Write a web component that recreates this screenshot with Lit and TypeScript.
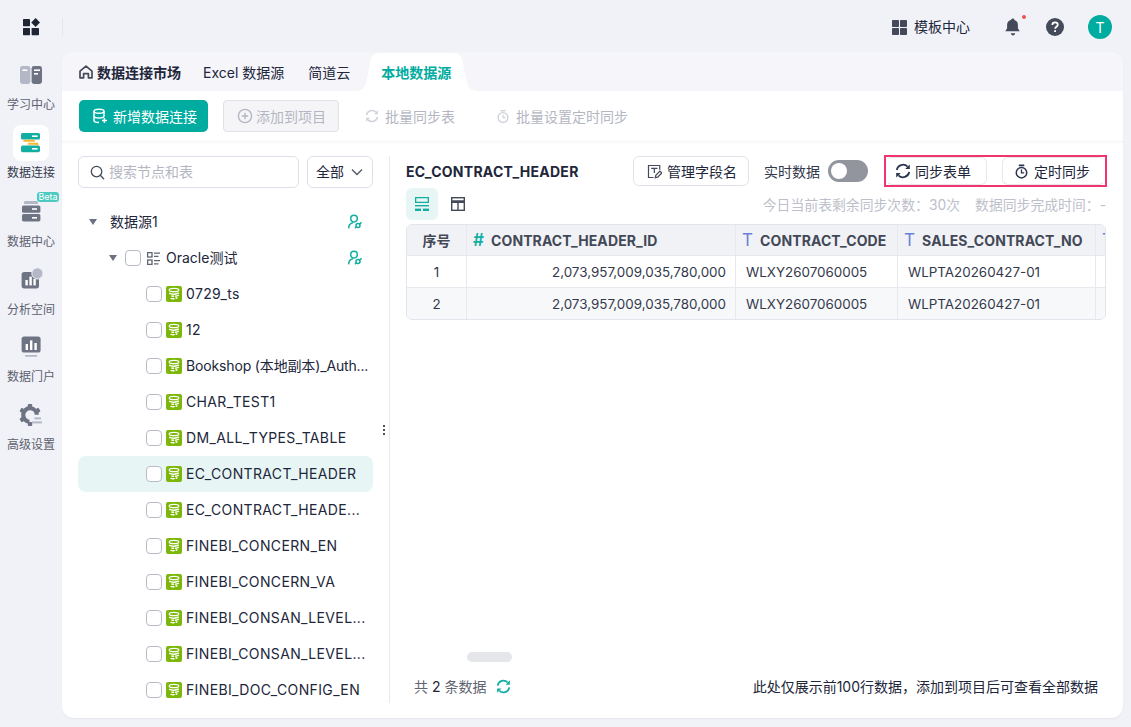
import { LitElement, html, css, svg } from 'lit';
import { customElement } from 'lit/decorators.js';

const syncPath = svg`<path d="M1.800 7A6.300 6.300 0 0 1 12.500 3.600M14.200 9A6.300 6.300 0 0 1 3.500 12.400" fill="none" stroke="currentColor" stroke-width="1.800"/><path d="M14.800 1.400v4.600H10.200zM1.200 14.600V10H5.800z" fill="currentColor"/>`;
const timerPath = svg`<circle cx="8" cy="9.200" r="5.600" fill="none" stroke="currentColor" stroke-width="1.600"/><path d="M5.800 1.400h4.400" stroke="currentColor" stroke-width="1.800" stroke-linecap="round"/><path d="M8 6.400v3h2.400" fill="none" stroke="currentColor" stroke-width="1.400" stroke-linecap="round"/>`;

const dbIcon = svg`<svg class="db" viewBox="0 0 16 16" width="16" height="16"><rect width="16" height="16" rx="2" fill="#7cb70a"/><ellipse cx="8" cy="4" rx="4.800" ry="1.700" fill="none" stroke="#fff" stroke-width="1.200"/><path d="M3.200 7.200c2.400 1.500 6.800 1.300 9.600-.3" fill="none" stroke="#fff" stroke-width="1.400"/><path d="M12.800 9.200c-2 1.100-4.800 1.300-7.400.8M4.600 12.300c2.200.7 4.800.5 6.800-.6" fill="none" stroke="#fff" stroke-width="1.400" stroke-dasharray="4 1"/></svg>`;

const linkIcon = svg`<svg class="link" viewBox="0 0 16 16" width="16" height="16" fill="none" stroke="#12aea2" stroke-width="1.500"><circle cx="7" cy="4.600" r="3.300"/><path d="M1.600 14.400c.2-3.200 2-5.200 4.400-5.600"/><circle cx="11" cy="11.400" r="2"/><path d="M12.600 10l2-1.600M9.400 12.800l-1.400 1.400"/></svg>`;

const sideIcons = [
  svg`<svg viewBox="0 0 24 24" width="24" height="24"><rect x="1" y="3" width="10.400" height="18" rx="2.400" fill="#b4b8c6"/><rect x="12.600" y="3" width="10.400" height="18" rx="2.400" fill="#6e7484"/><rect x="3.400" y="6.400" width="5" height="1.600" fill="#fff"/><rect x="15" y="6.400" width="6" height="1.600" fill="#fff"/><rect x="15" y="10" width="4" height="1.600" fill="#fff"/></svg>`,
  svg`<svg viewBox="0 0 24 24" width="24" height="24"><rect x="2" y="2" width="19" height="6.600" rx="1.600" fill="#12aea2"/><rect x="2" y="14.600" width="19" height="6.600" rx="1.600" fill="#12aea2"/><rect x="13" y="4.400" width="5.600" height="1.600" fill="#fff"/><rect x="13" y="17" width="5.600" height="1.600" fill="#fff"/><path d="M4.400 9.800h11.400M9 12.800h9.200v2" fill="none" stroke="#f5b731" stroke-width="2"/></svg>`,
  svg`<svg viewBox="0 0 24 24" width="24" height="24"><path d="M5 3.400C5 2.400 6 2 7 2h10c1 0 2 .4 2 1.400V5H5z" fill="#b4b8c6"/><rect x="3" y="6.400" width="18.400" height="7.400" rx="1.600" fill="#6e7484"/><rect x="3" y="15" width="18.400" height="7.400" rx="1.600" fill="#6e7484"/><rect x="13" y="9.200" width="5" height="1.600" fill="#fff"/><rect x="13" y="18" width="5" height="1.600" fill="#fff"/></svg>`,
  svg`<svg viewBox="0 0 24 24" width="24" height="24"><rect x="2.600" y="5" width="17.400" height="16.400" rx="2.600" fill="#6e7484"/><rect x="6.400" y="13" width="2.400" height="5.400" fill="#fff"/><rect x="10.400" y="9.600" width="2.400" height="8.800" fill="#fff"/><rect x="14.400" y="12" width="2.400" height="6.400" fill="#fff"/><circle cx="18.400" cy="6.400" r="5.600" fill="#b4b8c6" stroke="#f1f2f8"/></svg>`,
  svg`<svg viewBox="0 0 24 24" width="24" height="24"><rect x="2.600" y="1.600" width="19" height="16" rx="2.600" fill="#6e7484"/><rect x="6.600" y="9" width="2.400" height="6" fill="#fff"/><rect x="11" y="5.400" width="2.400" height="9.600" fill="#fff"/><rect x="15.400" y="8" width="2.400" height="7" fill="#fff"/><rect x="6" y="20" width="12.400" height="1.800" rx=".9" fill="#b4b8c6"/></svg>`,
  svg`<svg viewBox="0 0 24 24" width="24" height="24"><circle cx="11" cy="12" r="6.800" fill="none" stroke="#6e7484" stroke-width="4.200" stroke-dasharray="31 12" transform="rotate(95 11 12)"/><g fill="#6e7484"><rect x="8.800" y="1" width="4.400" height="4" rx=".8"/><rect x="8.800" y="1" width="4.400" height="4" rx=".8" transform="rotate(60 11 12)"/><rect x="8.800" y="1" width="4.400" height="4" rx=".8" transform="rotate(300 11 12)"/><rect x="8.800" y="1" width="4.400" height="4" rx=".8" transform="rotate(240 11 12)"/><rect x="8.800" y="1" width="4.400" height="4" rx=".8" transform="rotate(180 11 12)"/></g><rect x="15.400" y="14.400" width="6.600" height="2" fill="#b4b8c6"/><rect x="13" y="18.400" width="10" height="2" fill="#b4b8c6"/></svg>`,
];

const navItems = ['学习中心', '数据连接', '数据中心', '分析空间', '数据门户', '高级设置'];

const tables = [
  '0729_ts', '12', 'Bookshop (本地副本)_Auth...', 'CHAR_TEST1', 'DM_ALL_TYPES_TABLE',
  'EC_CONTRACT_HEADER', 'EC_CONTRACT_HEADE...', 'FINEBI_CONCERN_EN', 'FINEBI_CONCERN_VA',
  'FINEBI_CONSAN_LEVEL...', 'FINEBI_CONSAN_LEVEL...', 'FINEBI_DOC_CONFIG_EN',
];

const columns = [
  { type: '#', name: 'CONTRACT_HEADER_ID' },
  { type: 'T', name: 'CONTRACT_CODE' },
  { type: 'T', name: 'SALES_CONTRACT_NO' },
  { type: 'T', name: '' },
];

const rows = [1, 2];

@customElement('app-root')
export class AppRoot extends LitElement {
  static styles = css`
    :host {
      display: block;
      width: 1131px;
      height: 727px;
      overflow: hidden;
      background: #f1f2f8;
      color: #21263a;
      font-family: Inter, 'Noto Sans CJK SC', sans-serif;
      font-size: 14px;
    }
    svg { display: block; flex: none; }
    .top {
      height: 52px;
      display: flex;
      align-items: center;
      padding: 2px 19px 0 22px;
      box-sizing: border-box;
    }
    .logo { margin-right: 22px; }
    .top-sep { width: 1px; height: 18px; background: #e5e6ec; }
    .top-right { margin-left: auto; display: flex; align-items: center; }
    .tpl { display: flex; align-items: center; gap: 7px; margin-right: 35px; }
    .tpl span { margin-top: -3px; }
    .bell { position: relative; margin-right: 25px; }
    .dot {
      position: absolute;
      top: -3px;
      right: -5px;
      width: 4px;
      height: 4px;
      border-radius: 50%;
      background: #ef5350;
    }
    .help { margin-right: 24px; }
    .avatar {
      width: 24px;
      height: 24px;
      border-radius: 50%;
      background: #00ab9f;
      color: #fff;
      display: flex;
      align-items: center;
      justify-content: center;
      font-size: 14px;
    }
    .body { display: flex; height: 666px; }
    .side { width: 62px; flex: none; padding-top: 5px; }
    .nav {
      height: 68px;
      display: flex;
      flex-direction: column;
      align-items: center;
      font-size: 12px;
      line-height: 16px;
      color: #5c616e;
      position: relative;
    }
    .nav-ic {
      width: 36px;
      height: 36px;
      display: flex;
      align-items: center;
      justify-content: center;
      border-radius: 8px;
      margin-bottom: 4px;
    }
    .nav:nth-child(3) > span:last-child,
    .nav:nth-child(4) > span:last-child { margin-top: 1px; }
    .nav.on { color: #33384a; }
    .nav.on .nav-ic { background: #fff; }
    .beta {
      position: absolute;
      top: -1px;
      left: 37px;
      width: 22px;
      height: 10px;
      line-height: 10px;
      border-radius: 3px;
      background: #4ccabf;
      color: #fff;
      font-size: 9px;
      text-align: center;
    }
    .card {
      width: 1061px;
      background: #fff;
      border-radius: 12px;
      overflow: hidden;
      display: flex;
      flex-direction: column;
      box-shadow: 0 1px 2px rgba(40, 50, 90, .06);
    }
    .tabs {
      height: 39px;
      flex: none;
      background: #f5f5fa;
      display: flex;
      align-items: center;
      padding-left: 17px;
      box-sizing: border-box;
    }
    .tab { display: flex; align-items: center; gap: 4px; white-space: nowrap; }
    .tab.home { font-weight: 600; margin-right: 22px; }
    .tab.excel { margin-right: 24px; }
    .tab.cur {
      position: relative;
      align-self: flex-end;
      height: 38px;
      width: 102px;
      margin-left: 15px;
      justify-content: center;
      color: #00ab9f;
      font-weight: 600;
    }
    .tab.cur span { position: relative; }
    .tab-bg { position: absolute; left: -12px; bottom: 0; }
    .tools {
      height: 51px;
      flex: none;
      box-sizing: border-box;
      display: flex;
      align-items: center;
      padding-left: 17px;
      border-bottom: 1px solid #f4f5f8;
      box-shadow: 0 1px 3px rgba(40, 50, 90, .03);
    }
    .btn-main {
      width: 129px;
      height: 32px;
      border-radius: 5px;
      background: #00ab9f;
      color: #fff;
      display: flex;
      align-items: center;
      padding-left: 13px;
      gap: 5px;
      box-sizing: border-box;
      margin-right: 15px;
    }
    .btn-off {
      width: 116px;
      height: 32px;
      border-radius: 4px;
      border: 1px solid #e0e2e9;
      background: #f5f5f7;
      color: #b4b7c2;
      display: flex;
      align-items: center;
      padding-left: 13px;
      gap: 3px;
      box-sizing: border-box;
      margin-right: 26px;
    }
    .act { display: flex; align-items: center; gap: 6px; color: #b4b7c2; margin-right: 41px; }
    .act svg { color: #d0d3db; }
    .panes { flex: 1; display: flex; min-height: 0; }
    .left {
      width: 328px;
      flex: none;
      box-sizing: border-box;
      padding: 0 16px;
      margin-top: 14px;
      margin-bottom: 15px;
      border-right: 1px solid #e8e9ee;
      position: relative;
      overflow: hidden;
    }
    .filters { display: flex; gap: 8px; margin-bottom: 16px; }
    .search {
      width: 221px;
      height: 32px;
      border: 1px solid #dcdfe8;
      border-radius: 6px;
      box-sizing: border-box;
      display: flex;
      align-items: center;
      padding-left: 11px;
      gap: 4px;
      color: #b4b7c2;
    }
    .select {
      width: 66px;
      height: 32px;
      border: 1px solid #dcdfe8;
      border-radius: 6px;
      box-sizing: border-box;
      display: flex;
      align-items: center;
      padding-left: 8px;
      gap: 7px;
    }
    .search span, .select span { margin-top: -2px; }
    .row {
      height: 36px;
      width: 295px;
      display: flex;
      align-items: center;
      box-sizing: border-box;
      border-radius: 8px;
      position: relative;
    }
    .row.sel { background: #e7f6f5; }
    .row.l0 { padding-left: 11px; }
    .row.l1 { padding-left: 31px; }
    .row.l2 { padding-left: 68px; }
    .caret {
      width: 0;
      height: 0;
      border-left: 4.500px solid transparent;
      border-right: 4.500px solid transparent;
      border-top: 6px solid #6c7180;
      margin-right: 13px;
      flex: none;
    }
    .row.l1 .caret { margin-right: 8px; }
    .check {
      width: 16px;
      height: 16px;
      box-sizing: border-box;
      border: 1px solid #b8bbc6;
      border-radius: 4px;
      background: #fff;
      flex: none;
      margin-right: 4px;
    }
    .row.l1 .check { margin-right: 6px; }
    .db { margin-right: 4px; }
    .row.l1 .tree-ic { margin-right: 6px; }
    .label { white-space: nowrap; margin-top: -2px; }
    .row.l2 .label { letter-spacing: .36px; }
    .row.l2 .label.mixed { letter-spacing: -.15px; }
    .link { position: absolute; right: 10px; top: 10px; }
    .kebab {
      position: absolute;
      right: 4px;
      top: 269px;
      display: flex;
      flex-direction: column;
      gap: 2px;
    }
    .kebab i { width: 2px; height: 2px; background: #4a5060; display: block; }
    .right {
      flex: 1;
      min-width: 0;
      box-sizing: border-box;
      padding: 13px 16px 0 16px;
      display: flex;
      flex-direction: column;
      position: relative;
    }
    .head { display: flex; align-items: center; height: 32px; }
    .title { font-weight: 700; font-size: 14px; width: 227px; flex: none; letter-spacing: .26px; }
    .btn {
      height: 30px;
      border: 1px solid #e1e3ea;
      border-radius: 6px;
      box-sizing: border-box;
      display: flex;
      align-items: center;
      gap: 5px;
      background: #fff;
      flex: none;
    }
    .btn.names { width: 116px; padding-left: 13px; margin-right: 15px; }
    .live { color: #33384a; margin-right: 8px; flex: none; white-space: nowrap; }
    .toggle {
      width: 40px;
      height: 22px;
      border-radius: 11px;
      background: #93959e;
      position: relative;
      margin-right: 16px;
      flex: none;
    }
    .toggle i {
      position: absolute;
      left: 3px;
      top: 3px;
      width: 16px;
      height: 16px;
      border-radius: 50%;
      background: #fff;
    }
    .hl {
      border: 2px solid #f0356f;
      width: 223px;
      height: 32px;
      box-sizing: border-box;
      display: flex;
      gap: 15px;
      flex: none;
    }
    .hl .btn { height: 28px; border-color: #e6e8ee; }
    .hl .sync { width: 101px; padding-left: 8px; border-left-color: transparent; gap: 4px; }
    .hl .timer { width: 103px; padding-left: 11px; border-right-color: transparent; }
    .ic-dark { color: #2c3450; }
    .meta { display: flex; align-items: center; height: 32px; margin-top: 1px; margin-bottom: 4px; padding-right: 1px; }
    .view {
      width: 32px;
      height: 32px;
      border-radius: 6px;
      display: flex;
      align-items: center;
      justify-content: center;
    }
    .view.on { background: #e7f6f5; margin-right: 4px; }
    .info { margin-left: auto; display: flex; gap: 15px; color: #bdc0ca; font-size: 13.850px; }
    .table {
      border: 1px solid #e3e5ec;
      border-radius: 6px;
      overflow: hidden;
      display: grid;
      grid-template-columns: 60px 269px 162px 198px 9px;
      width: 700px;
      box-sizing: border-box;
      font-size: 13.400px;
    }
    .cell {
      height: 32px;
      box-sizing: border-box;
      border-right: 1px solid #e8e9ef;
      border-bottom: 1px solid #e8e9ef;
      display: flex;
      align-items: center;
      padding: 0 9px 0 10px;
      white-space: nowrap;
      overflow: hidden;
      color: #33384a;
    }
    .cell.last { border-right: none; padding: 0 0 0 6px; }
    .cell.th {
      height: 31px;
      background: #f1f2f6;
      font-weight: 700;
      font-size: 14px;
      letter-spacing: .1px;
      color: #434856;
      gap: 7px;
      padding-left: 6px;
    }
    .cell.idx { justify-content: center; padding: 0; }
    .cell.num { justify-content: flex-end; }
    .cell.even { background: #f7f8fa; }
    .cell.end { border-bottom: none; height: 31px; }
    .ty { font-size: 17px; font-weight: 400; line-height: 1; }
    .ty.n { color: #12aea2; font-weight: 600; }
    .ty.t { color: #6a80d8; }
    .thumb {
      position: absolute;
      left: 77px;
      top: 510px;
      width: 45px;
      height: 10px;
      border-radius: 5px;
      background: #e5e6ea;
    }
    .foot {
      margin-top: auto;
      height: 30px;
      margin-bottom: 17px;
      display: flex;
      align-items: center;
      padding: 0 9px 0 8px;
      font-size: 14px;
    }
    .count { color: #5f6470; }
    .count b { font-weight: 400; color: #21263a; }
    .foot svg { color: #12aea2; margin-left: 10px; }
    .foot .note { margin-left: auto; }
  `;

  render() {
    return html`
      <div class="top">
        <svg class="logo" viewBox="0 0 18 18" width="18" height="18" fill="#1f2535">
          <rect x="1" y="1" width="7" height="7.200" rx=".6"/>
          <path d="M13.600 0 18 4.500 13.600 9 9.200 4.500z"/>
          <rect x="1" y="10" width="7" height="7.200" rx=".6"/>
          <rect x="9.600" y="10" width="7.400" height="7.200" rx=".6"/>
        </svg>
        <div class="top-sep"></div>
        <div class="top-right">
          <div class="tpl">
            <svg viewBox="0 0 15 15" width="15" height="15" fill="#444a5a">
              <rect width="7" height="7" rx=".8"/><rect x="8" width="7" height="7" rx=".8"/>
              <rect y="8" width="7" height="7" rx=".8"/><rect x="8" y="8" width="7" height="7" rx=".8"/>
            </svg>
            <span>模板中心</span>
          </div>
          <div class="bell">
            <svg viewBox="0 0 16 18" width="16" height="18" fill="#444a5a">
              <path d="M8 .6c.8 0 1.300.6 1.300 1.300 2.300.6 3.600 2.600 3.600 5v3.400l1.800 3H.3l1.800-3V6.900c0-2.400 1.300-4.400 3.600-5C6.700 1.200 7.200.6 8 .6z"/>
              <path d="M5.800 15.200h4.400C10 16.600 9.100 17.400 8 17.400s-2-.8-2.200-2.200z"/>
            </svg>
            <i class="dot"></i>
          </div>
          <svg class="help" viewBox="0 0 18 18" width="18" height="18">
            <circle cx="9" cy="9" r="9" fill="#444a5a"/>
            <path d="M6.300 7c0-1.600 1.200-2.600 2.800-2.600S11.800 5.400 11.800 6.800c0 2-2.700 2-2.700 4" fill="none" stroke="#fff" stroke-width="1.700"/>
            <rect x="8.200" y="12.200" width="1.800" height="1.800" fill="#fff"/>
          </svg>
          <div class="avatar">T</div>
        </div>
      </div>
      <div class="body">
        <div class="side">
          ${navItems.map((name, i) => html`
            <div class="nav ${i === 1 ? 'on' : ''}">
              ${i === 2 ? html`<span class="beta">Beta</span>` : ''}
              <div class="nav-ic">${sideIcons[i]}</div>
              <span>${name}</span>
            </div>`)}
        </div>
        <div class="card">
          <div class="tabs">
            <div class="tab home">
              <svg viewBox="0 0 14 14" width="14" height="14" fill="none" stroke="#444a5a" stroke-width="1.700">
                <path d="M1 6.200 7 1.200l6 5V12.800H9.400V8.600H4.600v4.200H1z" stroke-linejoin="round"/>
              </svg>
              <span>数据连接市场</span>
            </div>
            <div class="tab excel">Excel 数据源</div>
            <div class="tab">简道云</div>
            <div class="tab cur">
              <svg class="tab-bg" viewBox="0 0 127 38" width="127" height="38">
                <path d="M0 38c8 0 12-2 13.500-10L17 10C18 3 21 0 27 0h73c6 0 9 3 10 10l3.500 18c1.500 8 5.500 10 13.500 10z" fill="#fff"/>
              </svg>
              <span>本地数据源</span>
            </div>
          </div>
          <div class="tools">
            <div class="btn-main">
              <svg viewBox="0 0 16 16" width="16" height="16" fill="none" stroke="#fff" stroke-width="1.500">
                <ellipse cx="7" cy="3.200" rx="5" ry="2"/>
                <path d="M2 3.200v9.400c0 1.100 2.200 2 5 2M2 8c0 1.100 2.200 2 5 2s5-.9 5-2V3.200"/>
                <path d="M12.400 10v5M10 12.500h5"/>
              </svg>
              <span>新增数据连接</span>
            </div>
            <div class="btn-off">
              <svg viewBox="0 0 16 16" width="16" height="16" fill="none" stroke="#b4b7c2" stroke-width="1.400">
                <circle cx="8" cy="8" r="6.600"/><path d="M8 4.800v6.400M4.800 8h6.400"/>
              </svg>
              <span>添加到项目</span>
            </div>
            <div class="act">
              <svg viewBox="0 0 16 16" width="14" height="14">${syncPath}</svg>
              <span>批量同步表</span>
            </div>
            <div class="act">
              <svg viewBox="0 0 16 16" width="14" height="15">${timerPath}</svg>
              <span>批量设置定时同步</span>
            </div>
          </div>
          <div class="panes">
            <div class="left">
              <div class="filters">
                <div class="search">
                  <svg viewBox="0 0 16 16" width="15" height="15" fill="none" stroke="#444a5a" stroke-width="1.400">
                    <circle cx="7" cy="7" r="5.600"/><path d="M11.200 11.200 14.600 14.600" stroke-linecap="round"/>
                  </svg>
                  <span>搜索节点和表</span>
                </div>
                <div class="select">
                  <span>全部</span>
                  <svg viewBox="0 0 12 8" width="12" height="8" fill="none" stroke="#555a68" stroke-width="1.400">
                    <path d="M1 1.500 6 6.500l5-5"/>
                  </svg>
                </div>
              </div>
              <div class="row l0">
                <i class="caret"></i><span class="label">数据源1</span>${linkIcon}
              </div>
              <div class="row l1">
                <i class="caret"></i><i class="check"></i>
                <svg class="tree-ic" viewBox="0 0 13 13" width="13" height="13" fill="none" stroke="#5f6470" stroke-width="1.300">
                  <rect x=".6" y=".6" width="4.400" height="4.400"/><rect x=".6" y="8" width="4.400" height="4.400"/>
                  <path d="M7 1.200h6M7 4.400h4.500M7 8.600h6M7 11.800h4.500"/>
                </svg>
                <span class="label">Oracle测试</span>${linkIcon}
              </div>
              ${tables.map(name => html`
                <div class="row l2 ${name === 'EC_CONTRACT_HEADER' ? 'sel' : ''}">
                  <i class="check"></i>${dbIcon}<span class="label ${name.startsWith('Bookshop') ? 'mixed' : ''}">${name}</span>
                </div>`)}
              <div class="kebab"><i></i><i></i><i></i></div>
            </div>
            <div class="right">
              <div class="head">
                <div class="title">EC_CONTRACT_HEADER</div>
                <div class="btn names">
                  <svg viewBox="0 0 16 16" width="15" height="15" fill="none" stroke="#444a5a" stroke-width="1.300">
                    <path d="M13.600 6V1.600H1.600v12.800H7"/><path d="M4.400 4.600h6.800M7.800 4.600v5"/><path d="M8.800 14.600l.6-2.600 4.400-4.400 2 2-4.400 4.400z"/>
                  </svg>
                  <span>管理字段名</span>
                </div>
                <div class="live">实时数据</div>
                <div class="toggle"><i></i></div>
                <div class="hl">
                  <div class="btn sync">
                    <svg class="ic-dark" viewBox="0 0 16 16" width="16" height="16">${syncPath}</svg>
                    <span>同步表单</span>
                  </div>
                  <div class="btn timer">
                    <svg class="ic-dark" viewBox="0 0 16 16" width="15" height="15">${timerPath}</svg>
                    <span>定时同步</span>
                  </div>
                </div>
              </div>
              <div class="meta">
                <div class="view on">
                  <svg viewBox="0 0 14 14" width="14" height="14" fill="#12aea2">
                    <path d="M0 0h14v6H0zM1.300 1.300v3.400h11.400V1.300z" fill-rule="evenodd"/>
                    <rect y="8" width="14" height="1.400"/><rect y="11.600" width="6" height="2.400"/><rect x="8" y="11.600" width="6" height="2.400"/>
                  </svg>
                </div>
                <div class="view">
                  <svg viewBox="0 0 14 14" width="14" height="14" fill="none" stroke="#444a5a" stroke-width="1.400">
                    <rect x=".7" y=".7" width="12.600" height="12.600"/>
                    <path d="M.7 4.600h12.600" stroke-width="2.600"/><path d="M7 5v8"/>
                  </svg>
                </div>
                <div class="info">
                  <span>今日当前表剩余同步次数：30次</span>
                  <span>数据同步完成时间：-</span>
                </div>
              </div>
              <div class="table">
                <div class="cell th idx">序号</div>
                ${columns.map((c, i) => html`
                  <div class="cell th ${i === 3 ? 'last' : ''}">
                    <span class="ty ${c.type === '#' ? 'n' : 't'}">${c.type}</span>
                    ${c.name ? html`<span>${c.name}</span>` : ''}
                  </div>`)}
                ${rows.map(n => {
                  const cls = `${n === 2 ? 'even end' : ''}`;
                  return html`
                    <div class="cell idx ${cls}">${n}</div>
                    <div class="cell num ${cls}">2,073,957,009,035,780,000</div>
                    <div class="cell ${cls}">WLXY2607060005</div>
                    <div class="cell ${cls}">WLPTA20260427-01</div>
                    <div class="cell last ${cls}"></div>`;
                })}
              </div>
              <div class="thumb"></div>
              <div class="foot">
                <span class="count">共 <b>2</b> 条数据</span>
                <svg viewBox="0 0 16 16" width="15" height="15">${syncPath}</svg>
                <span class="note">此处仅展示前100行数据，添加到项目后可查看全部数据</span>
              </div>
            </div>
          </div>
        </div>
      </div>
    `;
  }
}
